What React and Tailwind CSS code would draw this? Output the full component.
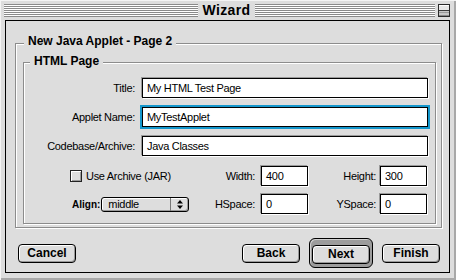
import React from 'react';

const stripes =
  'h-[13px] bg-[repeating-linear-gradient(to_bottom,#8a8a8a_0px,#8a8a8a_1px,#ffffff_1px,#ffffff_2px)]';

const Field = ({ value, focused, className = '' }) => (
  <div
    className={`h-[20px] border border-black bg-white flex items-center pl-[4px] text-[11px] tracking-[-0.3px] text-black ${
      focused
        ? 'shadow-[0_0_0_2px_#1497cc]'
        : 'shadow-[-1px_-1px_0_#9a9a9a,1px_1px_0_#ffffff]'
    } ${className}`}
  >
    {value}
  </div>
);

const Button = ({ children, className = '' }) => (
  <button
    type="button"
    className={`h-[19px] w-[58px] rounded-[4px] border border-black bg-[#dddddd] text-[12px] font-bold leading-none text-black shadow-[inset_1px_1px_0_#ffffff,inset_-1px_-1px_0_#999999] ${className}`}
  >
    {children}
  </button>
);

const Group = ({ label, labelLeft, labelTop, className = '', children }) => (
  <div
    className={`relative border border-[#8c8c8c] shadow-[inset_1px_1px_0_#ffffff,1px_1px_0_#ffffff] ${className}`}
  >
    <span
      className={`absolute ${labelLeft} ${labelTop} bg-[#dddddd] px-[4px] text-[12px] font-bold leading-[14px] text-black`}
    >
      {label}
    </span>
    {children}
  </div>
);

const App = () => {
  return (
    <div className="w-[456px] h-[280px] bg-[#dddddd] flex flex-col font-['Liberation_Sans',Arial,sans-serif] shadow-[inset_1px_1px_0_#f4f4f4,inset_-2px_-2px_0_#a8a8a8] select-none">
      {/* title bar */}
      <div className="h-[20px] flex items-center pl-[4px] pr-[6px] shrink-0">
        <div className={`w-[194px] ${stripes}`} />
        <div className="w-[57px] text-center text-[14px] font-bold tracking-[0.4px] leading-none text-black">
          Wizard
        </div>
        <div className={`flex-1 ${stripes}`} />
        <svg className="ml-[3px]" width="12" height="13" viewBox="0 0 12 13">
          <rect x="0.5" y="0.5" width="11" height="12" fill="#c8c8c8" stroke="#2a2a2a" />
          <rect x="1" y="1" width="10" height="5" fill="#e8e8e8" />
          <line x1="1" y1="1.5" x2="11" y2="1.5" stroke="#ffffff" />
          <line x1="1" y1="6.5" x2="11" y2="6.5" stroke="#3a3a3a" />
          <line x1="1" y1="8.5" x2="11" y2="8.5" stroke="#9a9a9a" />
          <line x1="1" y1="11.5" x2="11" y2="11.5" stroke="#888888" />
        </svg>
      </div>

      {/* content panel */}
      <div className="ml-[5px] mr-[6px] h-[253px] border border-black pt-[22px] pl-[9px] pr-[7px] flex flex-col">
        <Group
          label="New Java Applet - Page 2"
          labelLeft="left-[8px]"
          labelTop="top-[-10px]"
          className="pt-[18px] pl-[7px] pr-[5px] pb-[3px]"
        >
          <Group
            label="HTML Page"
            labelLeft="left-[6px]"
            labelTop="top-[-9px]"
            className="pt-[15px] pb-[9px] flex flex-col"
          >
            <div className="flex items-center">
              <div className="w-[111px] text-right text-[11px] tracking-[-0.3px] text-black">Title:</div>
              <Field value="My HTML Test Page" className="ml-[7px] w-[286px]" />
            </div>
            <div className="flex items-center mt-[9px]">
              <div className="w-[111px] text-right text-[11px] tracking-[-0.3px] text-black">Applet Name:</div>
              <Field value="MyTestApplet" focused className="ml-[7px] w-[286px]" />
            </div>
            <div className="flex items-center mt-[9px]">
              <div className="w-[111px] text-right text-[11px] tracking-[-0.3px] text-black">Codebase/Archive:</div>
              <Field value="Java Classes" className="ml-[7px] w-[286px]" />
            </div>

            <div className="flex items-center mt-[10px]">
              <div className="w-[176px] pl-[46px] flex items-center">
                <div className="w-[12px] h-[12px] border border-[#222222] bg-[#dddddd] shadow-[inset_1px_1px_0_#ffffff,inset_-1px_-1px_0_#9a9a9a]" />
                <span className="ml-[4px] text-[11px] tracking-[-0.3px] text-black">Use Archive (JAR)</span>
              </div>
              <div className="w-[55px] text-right text-[11px] tracking-[-0.3px] text-black">Width:</div>
              <Field value="400" className="ml-[6px] w-[47px]" />
              <div className="w-[68px] text-right text-[11px] tracking-[-0.3px] text-black">Height:</div>
              <Field value="300" className="ml-[4px] w-[47px]" />
            </div>

            <div className="flex items-center mt-[8px]">
              <div className="w-[176px] pl-[48px] flex items-center">
                <span className="text-[10px] font-bold text-black">Align:</span>
                <div className="ml-[1px] w-[88px] h-[15px] rounded-[3px] border border-black bg-[#dddddd] shadow-[inset_1px_1px_0_#ffffff,inset_-1px_-1px_0_#999999] flex items-center">
                  <span className="flex-1 pl-[6px] text-[11px] tracking-[-0.3px] leading-none text-black">middle</span>
                  <div className="w-[1px] h-[13px] bg-[#777777]" />
                  <div className="w-[17px] flex items-center justify-center">
                    <svg width="6" height="9" viewBox="0 0 6 9">
                      <path d="M3 0 L6 3.5 L0 3.5 Z" fill="#000000" />
                      <path d="M0 5.5 L6 5.5 L3 9 Z" fill="#000000" />
                    </svg>
                  </div>
                </div>
              </div>
              <div className="w-[55px] text-right text-[11px] tracking-[-0.3px] text-black">HSpace:</div>
              <Field value="0" className="ml-[6px] w-[47px]" />
              <div className="w-[68px] text-right text-[11px] tracking-[-0.3px] text-black">YSpace:</div>
              <Field value="0" className="ml-[4px] w-[47px]" />
            </div>
          </Group>
        </Group>

        <div className="mt-[10px] flex items-center">
          <Button className="ml-[3px]">Cancel</Button>
          <div className="flex-1" />
          <Button>Back</Button>
          <div className="ml-[9px] rounded-[6px] border border-black bg-[#9c9c9c] p-[2px] shadow-[inset_1px_1px_0_#cfcfcf]">
            <Button className="w-[57px]">Next</Button>
          </div>
          <Button className="ml-[9px] mr-[2px]">Finish</Button>
        </div>
      </div>
    </div>
  );
};

export default App;
